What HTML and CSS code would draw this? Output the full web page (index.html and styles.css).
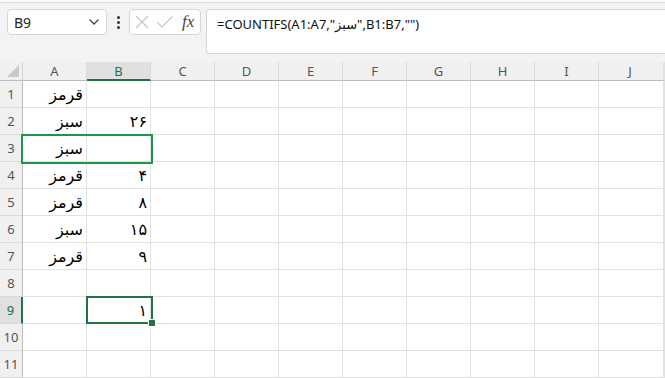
FILE: index.html
```html
<!DOCTYPE html>
<html lang="en">
<head>
  <meta charset="UTF-8">
  <title>COUNTIFS</title>
  <link rel="stylesheet" href="styles.css">
</head>
<body>

<div class="app">
  <div class="top-strip"></div>
  <div class="toolbar">
    <div class="namebox">
      <span>B9</span>
      <svg width="12" height="8" viewBox="0 0 12 8"><path d="M1.5 1.5 L6 6 L10.5 1.5" fill="none" stroke="#444" stroke-width="1.3"/></svg>
    </div>
    <div class="dots"><i></i><i></i><i></i></div>
    <div class="fxbox">
      <svg width="16" height="16" viewBox="0 0 16 16"><path d="M2 2 L14 14 M14 2 L2 14" stroke="#c4c4c4" stroke-width="1.2"/></svg>
      <svg width="18" height="16" viewBox="0 0 18 16"><path d="M1.5 8.5 L6 13 L16.5 2.5" fill="none" stroke="#c4c4c4" stroke-width="1.2"/></svg>
      <span class="fx">fx</span>
    </div>
    <div class="formula">=COUNTIFS(A1:A7,"سبز",B1:B7,"")</div>
  </div>

  <div class="sheet">
    <div class="corner"><svg width="12" height="12" viewBox="0 0 12 12"><path d="M12 0 L12 12 L0 12 Z" fill="#c9c9c9"/></svg></div>
    <div class="colhead">A</div>
    <div class="colhead active">B</div>
    <div class="colhead">C</div>
    <div class="colhead">D</div>
    <div class="colhead">E</div>
    <div class="colhead">F</div>
    <div class="colhead">G</div>
    <div class="colhead">H</div>
    <div class="colhead">I</div>
    <div class="colhead">J</div>

    <div class="rowhead">1</div><div class="cell">قرمز</div><div class="cell"></div><div class="cell"></div><div class="cell"></div><div class="cell"></div><div class="cell"></div><div class="cell"></div><div class="cell"></div><div class="cell"></div><div class="cell"></div>
    <div class="rowhead">2</div><div class="cell">سبز</div><div class="cell">۲۶</div><div class="cell"></div><div class="cell"></div><div class="cell"></div><div class="cell"></div><div class="cell"></div><div class="cell"></div><div class="cell"></div><div class="cell"></div>
    <div class="rowhead">3</div><div class="cell">سبز</div><div class="cell"></div><div class="cell"></div><div class="cell"></div><div class="cell"></div><div class="cell"></div><div class="cell"></div><div class="cell"></div><div class="cell"></div><div class="cell"></div>
    <div class="rowhead">4</div><div class="cell">قرمز</div><div class="cell">۴</div><div class="cell"></div><div class="cell"></div><div class="cell"></div><div class="cell"></div><div class="cell"></div><div class="cell"></div><div class="cell"></div><div class="cell"></div>
    <div class="rowhead">5</div><div class="cell">قرمز</div><div class="cell">۸</div><div class="cell"></div><div class="cell"></div><div class="cell"></div><div class="cell"></div><div class="cell"></div><div class="cell"></div><div class="cell"></div><div class="cell"></div>
    <div class="rowhead">6</div><div class="cell">سبز</div><div class="cell">۱۵</div><div class="cell"></div><div class="cell"></div><div class="cell"></div><div class="cell"></div><div class="cell"></div><div class="cell"></div><div class="cell"></div><div class="cell"></div>
    <div class="rowhead">7</div><div class="cell">قرمز</div><div class="cell">۹</div><div class="cell"></div><div class="cell"></div><div class="cell"></div><div class="cell"></div><div class="cell"></div><div class="cell"></div><div class="cell"></div><div class="cell"></div>
    <div class="rowhead">8</div><div class="cell"></div><div class="cell"></div><div class="cell"></div><div class="cell"></div><div class="cell"></div><div class="cell"></div><div class="cell"></div><div class="cell"></div><div class="cell"></div><div class="cell"></div>
    <div class="rowhead active">9</div><div class="cell"></div><div class="cell">۱</div><div class="cell"></div><div class="cell"></div><div class="cell"></div><div class="cell"></div><div class="cell"></div><div class="cell"></div><div class="cell"></div><div class="cell"></div>
    <div class="rowhead">10</div><div class="cell"></div><div class="cell"></div><div class="cell"></div><div class="cell"></div><div class="cell"></div><div class="cell"></div><div class="cell"></div><div class="cell"></div><div class="cell"></div><div class="cell"></div>
    <div class="rowhead">11</div><div class="cell"></div><div class="cell"></div><div class="cell"></div><div class="cell"></div><div class="cell"></div><div class="cell"></div><div class="cell"></div><div class="cell"></div><div class="cell"></div><div class="cell"></div>

    <div class="range-box"></div>
    <div class="select-box"><span class="handle"></span></div>
  </div>
</div>

</body>
</html>
```

FILE: styles.css
```css
body {
  margin: 0;
  width: 665px;
  height: 378px;
  overflow: hidden;
  background: #ffffff;
  font-family: 'Noto Sans', 'DejaVu Sans', sans-serif;
}

.app {
  display: flex;
  flex-direction: column;
}

.top-strip {
  height: 2px;
  background: #fbfbfb;
  border-bottom: 1px solid #dcdcdc;
}

.toolbar {
  height: 59px;
  background: #f3f3f3;
  display: flex;
  align-items: flex-start;
  padding: 6px 0 0 7px;
  box-sizing: border-box;
}

.namebox {
  width: 100px;
  height: 26px;
  box-sizing: border-box;
  background: #fff;
  border: 1px solid #d6d6d6;
  border-radius: 4px;
  display: flex;
  align-items: center;
  justify-content: space-between;
  padding: 0 6px 0 6px;
  font-size: 14px;
  color: #222;
}

.dots {
  width: 22px;
  height: 26px;
  display: flex;
  flex-direction: column;
  align-items: center;
  justify-content: center;
  gap: 2px;
}
.dots i {
  width: 3px;
  height: 3px;
  background: #333;
  border-radius: 50%;
}

.fxbox {
  width: 72px;
  height: 26px;
  box-sizing: border-box;
  background: #fff;
  border: 1px solid #d6d6d6;
  border-radius: 4px;
  display: flex;
  align-items: center;
  gap: 6px;
  padding: 0 4px 0 4px;
}

.fx {
  font-family: 'Liberation Serif', serif;
  font-style: italic;
  font-size: 17px;
  color: #444;
  margin-left: 2px;
}

.formula {
  margin-left: 5px;
  flex: 1;
  height: 45px;
  box-sizing: border-box;
  background: #fff;
  border: 1px solid #d6d6d6;
  border-right: none;
  border-radius: 4px 0 0 4px;
  padding: 5px 0 0 10px;
  font-size: 13px;
  color: #111;
  direction: ltr;
}

.sheet {
  position: relative;
  display: grid;
  grid-template-columns: 23px repeat(9, 64px) 66px;
  grid-template-rows: 19px repeat(11, 27px);
}

/* last column (J) */
.sheet > div:nth-child(11n) {
  border-right: 2px solid #e1e1e1;
  padding-right: 2px;
}

.corner {
  background: #f0f0f0;
  border-bottom: 1px solid #bdbdbd;
  border-right: 1px solid #d4d4d4;
  display: flex;
  align-items: flex-end;
  justify-content: flex-end;
  padding: 0 3px 3px 0;
  box-sizing: border-box;
}

.colhead {
  background: #f0f0f0;
  border-bottom: 1px solid #bdbdbd;
  border-right: 1px solid #dadada;
  box-sizing: border-box;
  font-size: 13px;
  color: #555;
  text-align: center;
  line-height: 19px;
}
.colhead.active {
  background: #e0e0e0;
  color: #217346;
  border-bottom: 2px solid #217346;
}

.rowhead {
  background: #f0f0f0;
  border-bottom: 1px solid #dadada;
  border-right: 1px solid #bdbdbd;
  box-sizing: border-box;
  font-size: 13px;
  color: #555;
  text-align: center;
  line-height: 27px;
}
.rowhead.active {
  background: #e0e0e0;
  color: #217346;
  border-right: 2px solid #217346;
}

.cell {
  border-bottom: 1px solid #e1e1e1;
  border-right: 1px solid #e1e1e1;
  box-sizing: border-box;
  direction: rtl;
  text-align: right;
  padding: 0 3px;
  line-height: 26px;
  font-size: 16px;
  color: #000;
}

.range-box {
  position: absolute;
  left: 21px;
  top: 72px;
  width: 132px;
  height: 30px;
  box-sizing: border-box;
  border: 2px solid #1e9647;
}

.select-box {
  position: absolute;
  left: 86px;
  top: 234px;
  width: 67px;
  height: 28px;
  box-sizing: border-box;
  border: 2px solid #217346;
}

.handle {
  position: absolute;
  right: -5px;
  bottom: -5px;
  width: 6px;
  height: 6px;
  background: #217346;
  border: 1px solid #fff;
}
```
